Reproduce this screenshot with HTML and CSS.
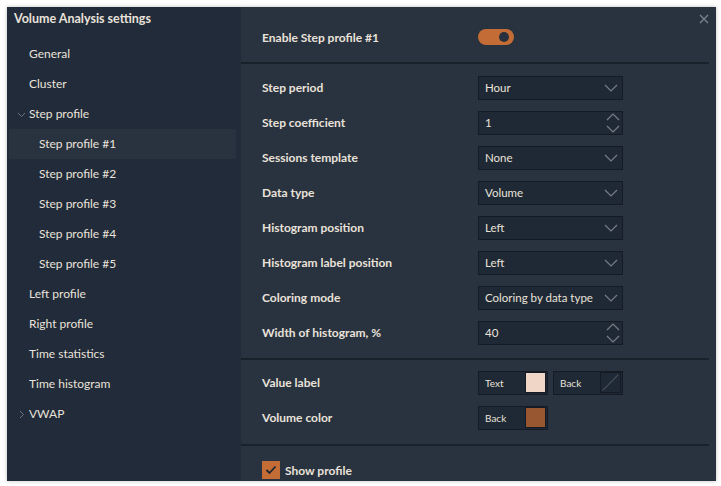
FILE: index.html
```html
<!DOCTYPE html>
<html>
<head>
<meta charset="utf-8">
<link rel="stylesheet" href="styles.css">
</head>
<body>
<div class="dialog">
  <aside class="sidebar">
    <div class="title">Volume Analysis settings</div>
    <ul class="nav">
      <li class="item">General</li>
      <li class="item">Cluster</li>
      <li class="item group"><svg class="caret" width="9" height="9" viewBox="0 0 9 9"><path d="M1 3 L4.5 6.5 L8 3" fill="none" stroke="#6b7480" stroke-width="1"/></svg>Step profile</li>
      <li class="item sub active">Step profile #1</li>
      <li class="item sub">Step profile #2</li>
      <li class="item sub">Step profile #3</li>
      <li class="item sub">Step profile #4</li>
      <li class="item sub">Step profile #5</li>
      <li class="item">Left profile</li>
      <li class="item">Right profile</li>
      <li class="item">Time statistics</li>
      <li class="item">Time histogram</li>
      <li class="item group"><svg class="caret" width="9" height="9" viewBox="0 0 9 9"><path d="M3 1 L6.5 4.5 L3 8" fill="none" stroke="#6b7480" stroke-width="1"/></svg>VWAP</li>
    </ul>
  </aside>
  <main class="panel">
    <svg class="close" width="10" height="10" viewBox="0 0 10 10"><path d="M1 1 L9 9 M9 1 L1 9" stroke="#7d8591" stroke-width="1.2"/></svg>
    <section class="section top">
      <div class="row">
        <label class="label">Enable Step profile #1</label>
        <div class="toggle"><span class="knob"></span></div>
      </div>
    </section>
    <section class="section rows main-rows">
      <div class="row"><label class="label">Step period</label><div class="control select">Hour<svg class="chev" width="14" height="8" viewBox="0 0 14 8"><path d="M1 1 L7 7 L13 1" fill="none" stroke="#767d86" stroke-width="1.2"/></svg></div></div>
      <div class="row"><label class="label">Step coefficient</label><div class="control">1<svg class="spin" width="14" height="20" viewBox="0 0 14 20"><path d="M1 7 L7 1 L13 7 M1 13 L7 19 L13 13" fill="none" stroke="#767d86" stroke-width="1.2"/></svg></div></div>
      <div class="row"><label class="label">Sessions template</label><div class="control select">None<svg class="chev" width="14" height="8" viewBox="0 0 14 8"><path d="M1 1 L7 7 L13 1" fill="none" stroke="#767d86" stroke-width="1.2"/></svg></div></div>
      <div class="row"><label class="label">Data type</label><div class="control select">Volume<svg class="chev" width="14" height="8" viewBox="0 0 14 8"><path d="M1 1 L7 7 L13 1" fill="none" stroke="#767d86" stroke-width="1.2"/></svg></div></div>
      <div class="row"><label class="label">Histogram position</label><div class="control select">Left<svg class="chev" width="14" height="8" viewBox="0 0 14 8"><path d="M1 1 L7 7 L13 1" fill="none" stroke="#767d86" stroke-width="1.2"/></svg></div></div>
      <div class="row"><label class="label">Histogram label position</label><div class="control select">Left<svg class="chev" width="14" height="8" viewBox="0 0 14 8"><path d="M1 1 L7 7 L13 1" fill="none" stroke="#767d86" stroke-width="1.2"/></svg></div></div>
      <div class="row"><label class="label">Coloring mode</label><div class="control select">Coloring by data type<svg class="chev" width="14" height="8" viewBox="0 0 14 8"><path d="M1 1 L7 7 L13 1" fill="none" stroke="#767d86" stroke-width="1.2"/></svg></div></div>
      <div class="row"><label class="label">Width of histogram, %</label><div class="control">40<svg class="spin" width="14" height="20" viewBox="0 0 14 20"><path d="M1 7 L7 1 L13 7 M1 13 L7 19 L13 13" fill="none" stroke="#767d86" stroke-width="1.2"/></svg></div></div>
    </section>
    <section class="section rows colors">
      <div class="row"><label class="label">Value label</label>
        <div class="swatches">
          <div class="color">Text<span class="sw sw-text"></span></div>
          <div class="color">Back<span class="sw sw-none"><svg width="22" height="22" viewBox="0 0 22 22"><path d="M2 20 L20 2" stroke="#4b535e" stroke-width="1.2"/></svg></span></div>
        </div>
      </div>
      <div class="row"><label class="label">Volume color</label>
        <div class="swatches"><div class="color">Back<span class="sw sw-brown"></span></div></div>
      </div>
    </section>
    <section class="section last">
      <div class="check-row"><span class="checkbox"><svg width="12" height="10" viewBox="0 0 12 10"><path d="M1.5 5 L4.5 8 L10.5 1.5" fill="none" stroke="#1e2632" stroke-width="1.8"/></svg></span><span class="label">Show profile</span></div>
    </section>
  </main>
</div>
</body>
</html>
```
FILE: styles.css
```css
* { box-sizing: border-box; }
html, body { margin: 0; padding: 0; background: #ffffff; }
body {
  width: 721px; height: 486px; overflow: hidden;
  padding: 7px 5px 5px 7px;
  font-family: Lato, "Open Sans", sans-serif;
  font-size: 12px;
  color: #e9e2da;
}
.dialog {
  display: flex;
  width: 709px;
  height: 474px;
  box-shadow: 0 0 4px rgba(0,0,0,0.25);
  overflow: hidden;
}
.sidebar {
  width: 234px;
  background: #212b39;
  padding: 4px 0 0 2px;
  flex: none;
}
.title {
  font-weight: 700;
  font-size: 12.5px;
  padding-left: 5px;
  height: 24px;
  line-height: 16px;
}
.nav { list-style: none; margin: 4px 0 0; padding: 0; }
.item {
  height: 30px;
  line-height: 30px;
  padding-left: 20px;
  width: 227px;
  position: relative;
}
.item.sub { padding-left: 30px; }
.item.active { background: #29333f; }
.caret { position: absolute; left: 8px; top: 11px; }
.panel {
  flex: 1;
  background: #29333f;
  position: relative;
  padding-right: 7px;
  display: flex;
  flex-direction: column;
}
.close { position: absolute; right: 7px; top: 7px; }
.section { border-bottom: 2px solid #19212b; }
.section.top { height: 57px; padding-top: 18px; }
.section.top .row { height: 24px; }
.rows { display: flex; flex-direction: column; gap: 12px; }
.main-rows { padding: 12px 0 14px; }
.row {
  display: flex;
  align-items: center;
  height: 23px;
  padding-left: 21px;
}
.label { font-weight: 700; width: 216px; flex: none; }
.toggle {
  width: 36px; height: 16px; border-radius: 8px;
  background: #c36c35;
  position: relative;
}
.knob {
  position: absolute; right: 5px; top: 3px;
  width: 10px; height: 10px; border-radius: 50%;
  background: #27303c;
}
.control {
  width: 145px; height: 24px;
  background: #1f2935;
  border: 1px solid #141b24;
  padding-left: 6px;
  display: flex; align-items: center; justify-content: space-between;
  padding-right: 2px;
  font-size: 11.5px;
}
.chev { margin-right: 2px; }
.spin { margin-right: 0; }
.colors { padding: 11px 0 15px; }
.swatches { display: flex; gap: 5px; }
.color {
  width: 70px; height: 24px;
  background: #1f2935;
  border: 1px solid #141b24;
  display: flex; align-items: center; justify-content: space-between;
  padding-left: 6px; padding-right: 1px;
  font-size: 10px;
}
.sw { width: 21px; height: 21px; display: block; border: 1px solid #141b24; }
.sw-text { background: #efd6c7; }
.sw-brown { background: #985730; }
.sw-none { background: #1f2935; }
.sw-none svg { display: block; width: 19px; height: 19px; }
.last { border-bottom: none; padding: 15px 0 0 21px; }
.check-row { display: flex; align-items: center; gap: 5px; }
.check-row .label { width: auto; }
.checkbox {
  width: 18px; height: 18px; background: #c36c35;
  display: flex; align-items: center; justify-content: center;
}
```
